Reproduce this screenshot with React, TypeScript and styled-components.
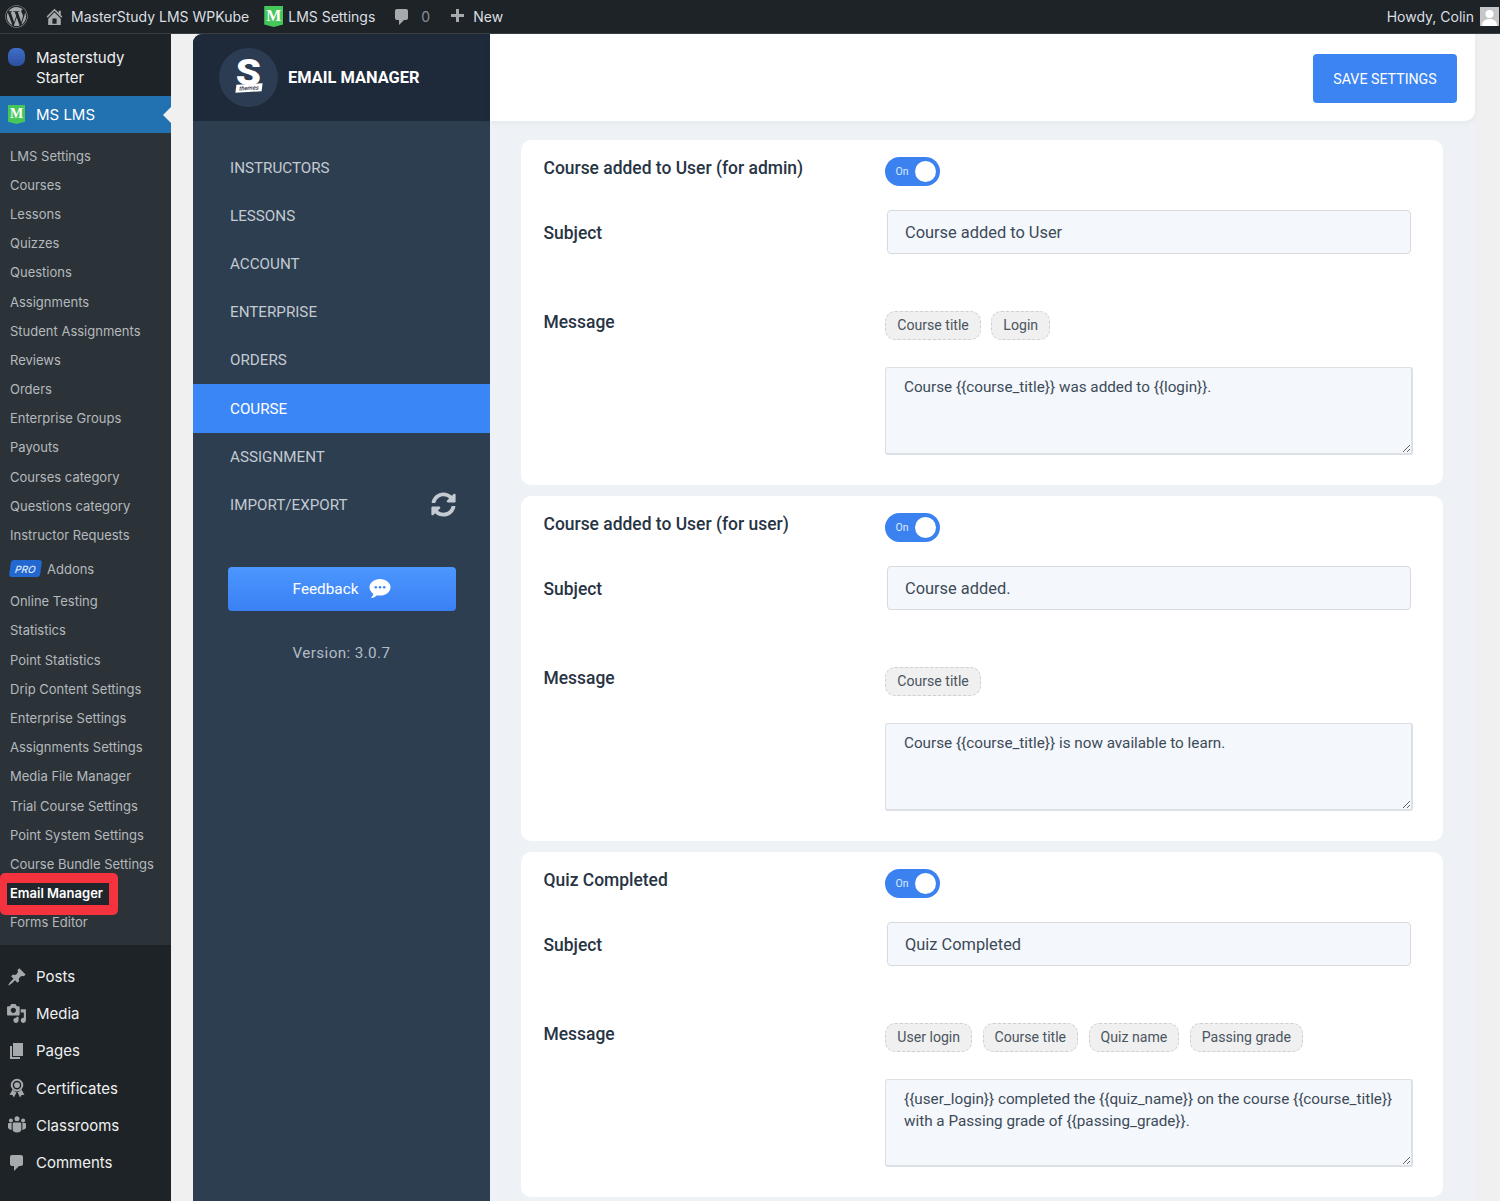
import React from 'react';
import styled, { createGlobalStyle } from 'styled-components';
import { FaWordpress, FaSyncAlt } from 'react-icons/fa';

const GlobalStyle = createGlobalStyle`
  html, body {
    margin: 0;
    padding: 0;
    height: 1201px;
    overflow: hidden;
    background: #f0f0f1;
    font-family: "Inter", "Liberation Sans", sans-serif;
  }
  *, *::before, *::after { box-sizing: border-box; }
`;

const Page = styled.div`
  width: 1500px;
  height: 1201px;
  display: flex;
  flex-direction: column;
  overflow: hidden;
`;

const AdminBar = styled.header`
  height: 34px;
  flex: none;
  display: flex;
  align-items: center;
  justify-content: space-between;
  background: #1d2327;
  border-bottom: 1px solid #3a3f44;
  color: #dcdfe2;
  font-size: 14px;
  padding: 0 1px 0 5px;
`;

const BarGroup = styled.div`
  display: flex;
  align-items: center;
`;

const BarItem = styled.span<{ $gap?: number; $tight?: boolean }>`
  display: flex;
  align-items: center;
  gap: ${(p) => (p.$tight ? 5 : 6)}px;
  margin-left: ${(p) => p.$gap ?? 0}px;
  white-space: nowrap;
`;

const Dash = styled.svg.attrs({ viewBox: '0 0 20 20' })<{ $size: number }>`
  width: ${(p) => p.$size}px;
  height: ${(p) => p.$size}px;
  fill: #a7aaad;
  flex: none;
`;

const MuteCount = styled.span`
  color: #8c8f94;
  margin-left: 3px;
`;

const MBadge = styled.span<{ $size: number; $font: number }>`
  width: ${(p) => p.$size}px;
  height: ${(p) => p.$size + 2}px;
  flex: none;
  display: flex;
  align-items: flex-start;
  justify-content: center;
  background: #46c75a;
  color: #fff;
  font-family: "Liberation Serif", serif;
  font-weight: 700;
  font-size: ${(p) => p.$font}px;
  line-height: ${(p) => p.$size}px;
  clip-path: polygon(0 0, 100% 0, 100% 88%, 50% 100%, 0 88%);
`;

const Avatar = styled.span`
  width: 19px;
  height: 19px;
  margin-left: 6px;
  background: #c4c6c8;
  overflow: hidden;
  display: block;
`;

const Body = styled.div`
  flex: 1;
  display: flex;
  min-height: 0;
`;

const Sidebar = styled.nav`
  width: 171px;
  flex: none;
  background: #1d2327;
  color: #f0f0f1;
  font-size: 15px;
`;

const SiteItem = styled.div`
  display: flex;
  gap: 11px;
  padding: 14px 8px 8px;
  line-height: 20px;
  height: 62px;
`;

const SiteDot = styled.span`
  width: 17px;
  height: 18px;
  border-radius: 7px;
  background: linear-gradient(#3f6fc8, #2d4f9e);
  flex: none;
`;

const ActiveItem = styled.div`
  position: relative;
  height: 37px;
  display: flex;
  align-items: center;
  gap: 11px;
  padding-left: 8px;
  background: #2271b1;
  color: #fff;

  &::after {
    content: '';
    position: absolute;
    right: 0;
    top: 11px;
    border: 8px solid transparent;
    border-left-width: 0;
    border-right-color: #f0f0f1;
  }
`;

const SubMenu = styled.ul`
  margin: 0;
  padding: 8px 0 8px;
  list-style: none;
  background: #2c3338;
  height: 812px;
`;

const SubItem = styled.li<{ $current?: boolean; $pro?: boolean }>`
  position: relative;
  height: ${(p) => (p.$pro ? 37 : 29.2)}px;
  display: flex;
  align-items: center;
  gap: 6px;
  padding: ${(p) => (p.$pro ? '1px 0 0 10px' : '0 0 0 10px')};
  font-size: 13px;
  white-space: nowrap;
  color: ${(p) => (p.$current ? '#fff' : '#b4b9be')};
  font-weight: ${(p) => (p.$current ? 600 : 400)};

  ${(p) =>
    p.$current &&
    `
    &::after {
      content: '';
      position: absolute;
      left: 0;
      top: -6px;
      width: 118px;
      height: 42px;
      border: 10px solid #f5333f;
      border-left-width: 7px;
      border-right-width: 9px;
      border-radius: 5px;
      background: #20262c;
    }
  `}
`;

const CurrentLabel = styled.span`
  position: relative;
  z-index: 1;
`;

const ProTag = styled.span`
  width: 31px;
  height: 17px;
  display: flex;
  align-items: center;
  justify-content: center;
  background: #2367d1;
  color: #dfe9fb;
  border-radius: 3px;
  font-size: 10px;
  font-weight: 500;
  font-style: italic;
  transform: skewX(-8deg);
`;

const MainMenu = styled.ul`
  margin: 0;
  padding: 13px 0 0;
  list-style: none;
`;

const MainItem = styled.li`
  height: 37.2px;
  display: flex;
  align-items: center;
  gap: 10px;
  padding-left: 7px;
  color: #f0f0f1;
`;

const MainIcon = styled.span`
  width: 19px;
  display: flex;
  justify-content: center;
  color: #a7aaad;
  flex: none;
`;

const Plugin = styled.main`
  width: 1282px;
  margin-left: 22px;
  display: flex;
  min-height: 0;
`;

const Side = styled.aside`
  width: 297px;
  flex: none;
  background: #2d3e50;
  border-top-left-radius: 9px;
  overflow: hidden;
  font-family: "Roboto", sans-serif;
`;

const Brand = styled.div`
  height: 87px;
  display: flex;
  align-items: center;
  gap: 10px;
  padding-left: 26px;
  background: #1e2a3a;
  color: #fff;
  font-size: 16.4px;
  font-weight: 700;
`;

const LogoDisc = styled.span`
  position: relative;
  width: 59px;
  height: 59px;
  border-radius: 50%;
  background: #2c3c52;
  display: flex;
  justify-content: center;
  flex: none;
`;

const LogoLetter = styled.span`
  font-size: 36px;
  font-weight: 900;
  line-height: 42px;
  margin-top: 4px;
  color: #fff;
  transform: scaleX(1.12);
`;

const LogoTag = styled.span`
  position: absolute;
  left: 17px;
  top: 36px;
  width: 26px;
  height: 8px;
  background: #fff;
  color: #1e2a3a;
  font-size: 6px;
  font-style: italic;
  line-height: 8px;
  text-align: center;
  font-weight: 500;
  transform: skewX(-10deg) rotate(-3deg);
`;

const SideNav = styled.div`
  padding-top: 22.7px;
`;

const NavItem = styled.div<{ $active?: boolean }>`
  height: 48.17px;
  display: flex;
  align-items: center;
  justify-content: space-between;
  padding: 0 34px 0 37px;
  font-size: 15.2px;
  color: ${(p) => (p.$active ? '#fff' : '#c3cad1')};
  background: ${(p) => (p.$active ? '#3b86f7' : 'transparent')};
`;

const FeedbackButton = styled.button`
  display: flex;
  align-items: center;
  justify-content: center;
  gap: 11px;
  width: 228px;
  height: 44px;
  margin: 38.3px 0 0 35px;
  border: 0;
  border-radius: 4px;
  background: linear-gradient(#4b96ff, #3a80f3);
  color: #fff;
  font-family: inherit;
  font-size: 15.3px;
`;

const Version = styled.div`
  margin-top: 32px;
  text-align: center;
  color: #b3bcc5;
  font-size: 15.2px;
  letter-spacing: 0.4px;
  line-height: 20px;
`;

const Content = styled.section`
  flex: 1;
  background: #eef1f5;
  font-family: "Roboto", sans-serif;
  min-width: 0;
`;

const TopRow = styled.div`
  height: 87px;
  display: flex;
  align-items: center;
  justify-content: flex-end;
  padding: 2px 18px 0 0;
  background: #fff;
  border-bottom-right-radius: 10px;
  box-shadow: 0 2px 6px rgba(40, 50, 70, 0.05);
`;

const SaveButton = styled.button`
  width: 144px;
  height: 49px;
  border: 0;
  border-radius: 4px;
  background: #3b84f2;
  color: #fff;
  font-family: inherit;
  font-size: 14.2px;
`;

const Cards = styled.div`
  display: flex;
  flex-direction: column;
  gap: 11px;
  padding: 19px 32px 0 31px;
`;

const Card = styled.article`
  height: 345px;
  padding: 17px 31px 0 22.5px;
  background: #fff;
  border-radius: 10px;
`;

const Label = styled.div<{ $drop?: boolean }>`
  width: 341px;
  flex: none;
  padding-top: ${(p) => (p.$drop ? 1 : 0)}px;
  font-size: 17.45px;
  font-weight: 500;
  line-height: 22px;
  color: #273444;
`;

const Row = styled.div<{ $center?: boolean; $top?: number }>`
  display: flex;
  align-items: ${(p) => (p.$center ? 'center' : 'flex-start')};
  margin-top: ${(p) => p.$top ?? 0}px;
`;

const Control = styled.div`
  flex: 1;
  min-width: 0;
`;

const Switch = styled.span`
  width: 55px;
  height: 29px;
  display: flex;
  align-items: center;
  justify-content: space-between;
  padding: 0 4px 0 11px;
  border-radius: 15px;
  background: #3b82f0;
  color: #dce9fd;
  font-size: 10.5px;
`;

const Knob = styled.span`
  width: 21px;
  height: 21px;
  border-radius: 50%;
  background: #fff;
`;

const SubjectField = styled.div`
  height: 44px;
  margin: 0 1px 0 2px;
  display: flex;
  align-items: center;
  padding-left: 17.5px;
  background: #f4f7fb;
  border: 1px solid #d7dbe0;
  border-radius: 4px;
  font-size: 16.4px;
  color: #3d4a58;
`;

const Chips = styled.div`
  display: flex;
  gap: 10.5px;
  padding-left: 0.8px;
`;

const Chip = styled.span`
  height: 29px;
  display: flex;
  align-items: center;
  padding: 0 11px 1px;
  background: #f0f0f0;
  border: 1px dashed #cfcfcf;
  border-radius: 10px;
  font-size: 14.1px;
  color: #4b5560;
`;

const MessageField = styled.div`
  height: 88px;
  margin: 27px -1px 0 0;
  padding: 8px 14px 8px 18.5px;
  background: #f4f7fb;
  border-style: solid;
  border-color: #dcdfe4;
  border-width: 1px 2px 2px 1px;
  border-radius: 3px;
  font-size: 15.25px;
  line-height: 22px;
  color: #3d4a58;
  resize: both;
  overflow: auto;
`;

const submenuA = [
  'LMS Settings', 'Courses', 'Lessons', 'Quizzes', 'Questions', 'Assignments', 'Student Assignments',
  'Reviews', 'Orders', 'Enterprise Groups', 'Payouts', 'Courses category', 'Questions category', 'Instructor Requests',
];
const submenuB = [
  'Online Testing', 'Statistics', 'Point Statistics', 'Drip Content Settings', 'Enterprise Settings',
  'Assignments Settings', 'Media File Manager', 'Trial Course Settings', 'Point System Settings', 'Course Bundle Settings',
];

const postPath = 'M10.44 3.02l1.82-1.82 6.36 6.35-1.83 1.82c-1.05-.68-2.48-.57-3.41.36l-.75.75c-.92.93-1.04 2.35-.35 3.41l-1.83 1.82-2.41-2.41-2.8 2.79c-.42.42-3.38 2.71-3.8 2.29s1.86-3.39 2.28-3.81l2.79-2.79L4.1 9.36l1.83-1.82c1.05.69 2.48.57 3.4-.36l.75-.75c.93-.92 1.05-2.35.36-3.41z';
const mediaPath = 'M13 11V4c0-.55-.45-1-1-1h-1.67L9 1H5L3.67 3H2c-.55 0-1 .45-1 1v7c0 .55.45 1 1 1h10c.55 0 1-.45 1-1zM7 4.5c1.38 0 2.5 1.12 2.5 2.5S8.38 9.5 7 9.5 4.5 8.38 4.5 7 5.62 4.5 7 4.5zM14 6h5v10.5c0 1.38-1.12 2.5-2.5 2.5S14 17.88 14 16.5s1.12-2.5 2.5-2.5c.17 0 .34.02.5.05V9h-3V6zm-4 8.05V13h2v3.5c0 1.38-1.12 2.5-2.5 2.5S7 17.88 7 16.5 8.12 14 9.5 14c.17 0 .34.02.5.05z';
const pagePath = 'M6 15V2h10v13H6zm-1 1h8v2H3V5h2v11z';
const commentPath = 'M5 2h9c1.1 0 2 .9 2 2v7c0 1.1-.9 2-2 2h-2l-5 5v-5H5c-1.1 0-2-.9-2-2V4c0-1.1.9-2 2-2z';
const homePath = 'M16 8.5l1.53 1.53-1.06 1.06L10 4.62l-6.47 6.47-1.06-1.06L10 2.5l4 4v-2h2v4zm-6-2.46l6 5.99V18H4v-5.97zM12 17v-5H8v5h4z';
const plusPath = 'M17 7v3h-5v5H9v-5H4V7h5V2h3v5h5z';

const CertificateIcon = () => (
  <Dash $size={20}>
    <path d="M5.6 11.500 2.500 16.800l3 .1 1.400 2.500 2.600-5.200a6 6 0 0 1-3.900-2.700zM14.400 11.500l3.100 5.300-3 .1-1.400 2.500-2.600-5.200a6 6 0 0 0 3.900-2.700z" />
    <path fillRule="evenodd" d="M10 .8a6.300 6.300 0 1 1 0 12.600A6.300 6.300 0 0 1 10 .8zm0 2a4.300 4.300 0 1 0 0 8.600 4.300 4.300 0 0 0 0-8.600z" />
    <circle cx="10" cy="7.100" r="2.900" />
  </Dash>
);

const ClassroomIcon = () => (
  <Dash $size={20}>
    <circle cx="10" cy="3.800" r="2.500" />
    <circle cx="3.900" cy="5.500" r="2" />
    <circle cx="16.100" cy="5.500" r="2" />
    <path d="M7 7.500h6c.8 0 1.300.5 1.300 1.300v6.200c0 1-1.900 2.500-4.300 2.500s-4.300-1.500-4.300-2.500V8.800C5.700 8 6.200 7.500 7 7.500z" />
    <path d="M1 9.300c0-.8.500-1.300 1.300-1.300h2.300v7c-2-.300-3.600-1.400-3.600-2.400zM19 9.300c0-.8-.5-1.300-1.300-1.300h-2.300v7c2-.300 3.600-1.400 3.600-2.400z" />
  </Dash>
);

const mainItems = [
  { label: 'Posts', icon: <Dash $size={20}><path d={postPath} /></Dash> },
  { label: 'Media', icon: <Dash $size={21}><path d={mediaPath} /></Dash> },
  { label: 'Pages', icon: <Dash $size={20}><path d={pagePath} /></Dash> },
  { label: 'Certificates', icon: <CertificateIcon /> },
  { label: 'Classrooms', icon: <ClassroomIcon /> },
  { label: 'Comments', icon: <Dash $size={20}><path d={commentPath} /></Dash> },
];

const navItems = ['INSTRUCTORS', 'LESSONS', 'ACCOUNT', 'ENTERPRISE', 'ORDERS', 'COURSE', 'ASSIGNMENT'];

const emails = [
  {
    title: 'Course added to User (for admin)',
    subject: 'Course added to User',
    chips: ['Course title', 'Login'],
    message: ['Course {{course_title}} was added to {{login}}.'],
  },
  {
    title: 'Course added to User (for user)',
    subject: 'Course added.',
    chips: ['Course title'],
    message: ['Course {{course_title}} is now available to learn.'],
  },
  {
    title: 'Quiz Completed',
    subject: 'Quiz Completed',
    chips: ['User login', 'Course title', 'Quiz name', 'Passing grade'],
    message: ['{{user_login}} completed the {{quiz_name}} on the course {{course_title}}', 'with a Passing grade of {{passing_grade}}.'],
  },
];

const ChatIcon = () => (
  <svg width="22" height="20" viewBox="0 0 22 20">
    <path fill="#fff" d="M11 0c5.800 0 10.500 3.700 10.500 8.300S16.800 16.600 11 16.600c-1 0-2-.1-2.900-.3C6.500 17.800 4.200 19 1.800 19c1.300-1.200 2.200-2.700 2.500-4.300C2 13.200.5 10.900.5 8.300.5 3.700 5.200 0 11 0z" />
    <circle cx="6.800" cy="8.300" r="1.300" fill="#3f88f8" />
    <circle cx="11" cy="8.300" r="1.300" fill="#3f88f8" />
    <circle cx="15.200" cy="8.300" r="1.300" fill="#3f88f8" />
  </svg>
);

const App = (): React.ReactElement => (
  <Page>
    <GlobalStyle />
    <AdminBar>
      <BarGroup>
        <FaWordpress size={23} color="#a7aaad" />
        <BarItem $gap={16}>
          <Dash $size={21}><path d={homePath} /></Dash>
          MasterStudy LMS WPKube
        </BarItem>
        <BarItem $gap={15} $tight>
          <MBadge $size={19} $font={16}>M</MBadge>
          LMS Settings
        </BarItem>
        <BarItem $gap={17}>
          <Dash $size={20}><path d={commentPath} /></Dash>
          <MuteCount>0</MuteCount>
        </BarItem>
        <BarItem $gap={17}>
          <Dash $size={20}><path d={plusPath} /></Dash>
          New
        </BarItem>
      </BarGroup>
      <BarGroup>
        Howdy, Colin
        <Avatar>
          <svg width="19" height="19" viewBox="0 0 19 19">
            <circle cx="9.500" cy="7" r="4" fill="#fff" />
            <path d="M2 19c0-5 3-7 7.500-7s7.500 2 7.500 7z" fill="#fff" />
          </svg>
        </Avatar>
      </BarGroup>
    </AdminBar>
    <Body>
      <Sidebar>
        <SiteItem>
          <SiteDot />
          <span>Masterstudy<br />Starter</span>
        </SiteItem>
        <ActiveItem>
          <MBadge $size={17} $font={14}>M</MBadge>
          MS LMS
        </ActiveItem>
        <SubMenu>
          {submenuA.map((item) => <SubItem key={item}>{item}</SubItem>)}
          <SubItem $pro><ProTag>PRO</ProTag>Addons</SubItem>
          {submenuB.map((item) => <SubItem key={item}>{item}</SubItem>)}
          <SubItem $current><CurrentLabel>Email Manager</CurrentLabel></SubItem>
          <SubItem>Forms Editor</SubItem>
        </SubMenu>
        <MainMenu>
          {mainItems.map((item) => (
            <MainItem key={item.label}>
              <MainIcon>{item.icon}</MainIcon>
              {item.label}
            </MainItem>
          ))}
        </MainMenu>
      </Sidebar>
      <Plugin>
        <Side>
          <Brand>
            <LogoDisc>
              <LogoLetter>S</LogoLetter>
              <LogoTag>themes</LogoTag>
            </LogoDisc>
            EMAIL MANAGER
          </Brand>
          <SideNav>
            {navItems.map((item) => (
              <NavItem key={item} $active={item === 'COURSE'}>{item}</NavItem>
            ))}
            <NavItem>
              IMPORT/EXPORT
              <FaSyncAlt size={25} color="#c3cad1" />
            </NavItem>
          </SideNav>
          <FeedbackButton>Feedback <ChatIcon /></FeedbackButton>
          <Version>Version: 3.0.7</Version>
        </Side>
        <Content>
          <TopRow>
            <SaveButton>SAVE SETTINGS</SaveButton>
          </TopRow>
          <Cards>
            {emails.map((email) => (
              <Card key={email.title}>
                <Row>
                  <Label>{email.title}</Label>
                  <Switch>On<Knob /></Switch>
                </Row>
                <Row $center $top={24}>
                  <Label $drop>Subject</Label>
                  <Control><SubjectField>{email.subject}</SubjectField></Control>
                </Row>
                <Row $top={57}>
                  <Label>Message</Label>
                  <Control>
                    <Chips>
                      {email.chips.map((chip) => <Chip key={chip}>{chip}</Chip>)}
                    </Chips>
                    <MessageField>
                      {email.message.map((line) => <div key={line}>{line}</div>)}
                    </MessageField>
                  </Control>
                </Row>
              </Card>
            ))}
          </Cards>
        </Content>
      </Plugin>
    </Body>
  </Page>
);

export default App;
